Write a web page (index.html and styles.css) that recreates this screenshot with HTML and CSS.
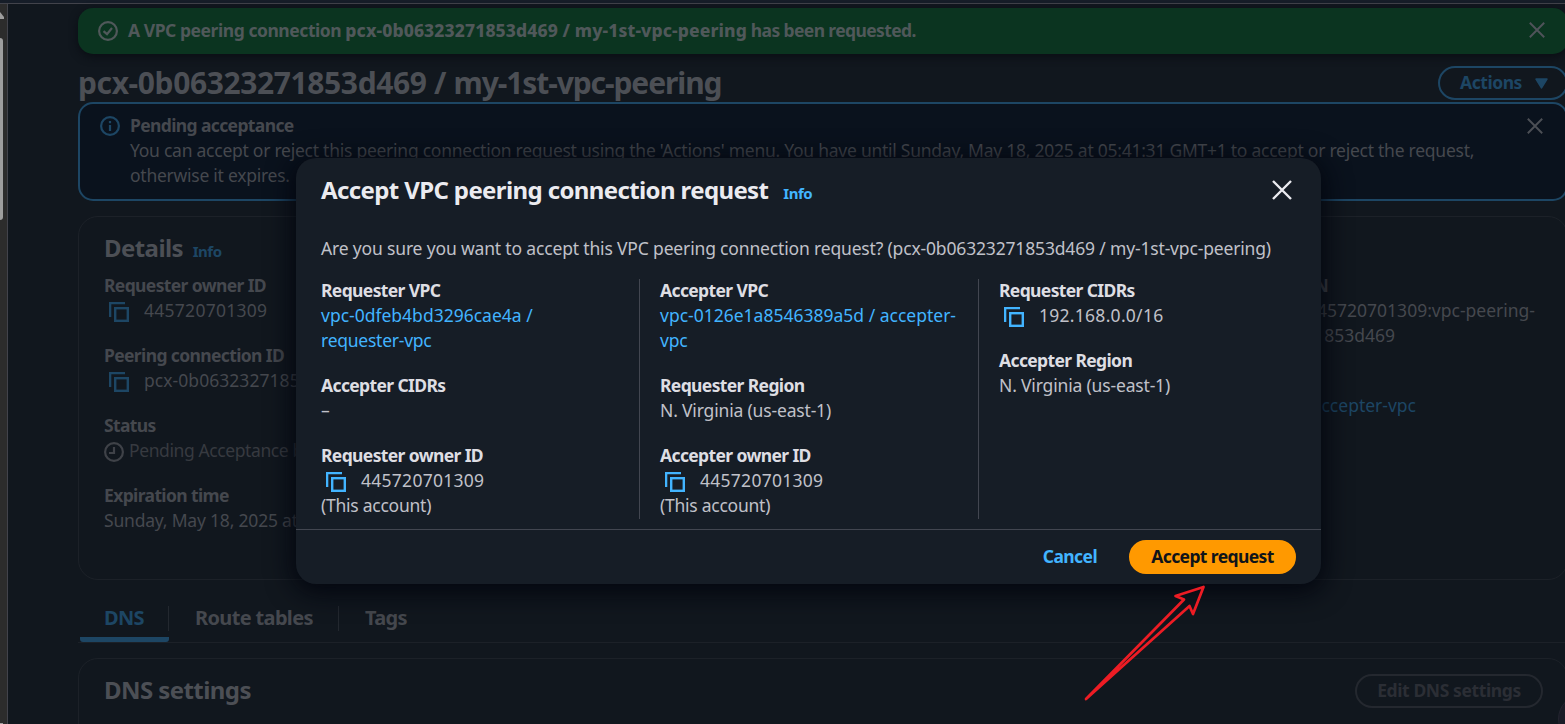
FILE: index.html
```html
<!DOCTYPE html>
<html lang="en">
<head>
<meta charset="utf-8">
<title>Accept VPC peering connection request</title>
<link rel="stylesheet" href="styles.css">
</head>
<body>
<svg class="defs" width="0" height="0">
  <defs>
    <symbol id="copy" viewBox="0 0 20 20"><path d="M1.15 15V1.15H16" fill="none" stroke="currentColor" stroke-width="2.3"/><rect x="6.2" y="6.2" width="12.6" height="12.6" fill="none" stroke="currentColor" stroke-width="2.4"/></symbol>
    <symbol id="close" viewBox="0 0 20 20"><path d="M1 1L19 19M19 1L1 19" fill="none" stroke="currentColor" stroke-width="2.4"/></symbol>
  </defs>
</svg>
<div class="topline"></div>
<div class="app">
  <div class="gutter">
    <svg class="scroll-up" width="4" height="8" viewBox="0 0 4 8"><path d="M0 0L4 5V7H0Z" fill="#9e9e9e"/></svg>
    <div class="thumb"></div>
    <div class="scroll-down"></div>
  </div>
  <main class="page">
    <div class="flash">
      <svg width="20" height="20" viewBox="0 0 20 20" fill="none" stroke="currentColor" stroke-width="2.2"><circle cx="10" cy="10" r="8.9"/><path d="M5.5 10.2L9 13.2L14 7"/></svg>
      <div class="flash-text"><span class="f1">A VPC peering connection </span><b class="f2">pcx-0b06323271853d469 / my-1st-vpc-peering</b><span class="f3"> has been requested.</span></div>
      <svg class="x" width="16" height="16"><use href="#close"/></svg>
    </div>
    <div class="head">
      <h1><span class="h1-id">pcx-0b06323271853d469 </span>/ <span class="h1-name">my-1st-vpc-peering</span></h1>
      <div class="btn actions">Actions <svg width="13" height="11" viewBox="0 0 12 10"><path d="M1 1H11L6 9Z" fill="currentColor" stroke="currentColor" stroke-width="1.5" stroke-linejoin="round"/></svg></div>
    </div>
    <div class="alert">
      <svg width="20" height="20" viewBox="0 0 20 20" fill="none" stroke="currentColor" stroke-width="2.2"><circle cx="10" cy="10" r="8.9"/><path d="M10 9V15M10 5V7.2"/></svg>
      <div class="alert-text">
        <div class="label a0">Pending acceptance</div>
        <div class="a1">You can accept or reject this peering connection request using the 'Actions' menu. You have until Sunday, May 18, 2025 at 05:41:31 GMT+1 to accept or reject the request,</div>
        <div class="a1">otherwise it expires.</div>
      </div>
      <svg class="x" width="16" height="16"><use href="#close"/></svg>
    </div>
    <section class="card details">
      <h2>Details <span class="info">Info</span></h2>
      <div class="detail-cols">
        <div class="col">
          <div><div class="label">Requester owner ID</div><div class="copyrow"><svg width="20" height="20"><use href="#copy"/></svg><span>445720701309</span></div></div>
          <div><div class="label">Peering connection ID</div><div class="copyrow pcx"><svg width="20" height="20"><use href="#copy"/></svg><span>pcx-0b06323271853d469</span></div></div>
          <div><div class="label">Status</div><div class="status"><svg width="20" height="20" viewBox="0 0 20 20" fill="none" stroke="currentColor" stroke-width="2.2"><circle cx="10" cy="10" r="8.9"/><path d="M10 5V11H5"/></svg><span>Pending Acceptance by</span></div></div>
          <div><div class="label">Expiration time</div><div class="exp">Sunday, May 18, 2025 at 05:41:31</div></div>
        </div>
        <div class="col tail">
          <div><div class="label t1">Peering connection ARN</div><div class="t2">445720701309:vpc-peering-</div><div class="t3">853d469</div></div>
          <div><div class="label t5">Accepter VPC</div><div class="link t4">accepter-vpc</div></div>
        </div>
      </div>
    </section>
    <nav class="tabs"><div class="tab on"><span>DNS</span></div><div class="tab"><span>Route tables</span></div><div class="tab"><span>Tags</span></div></nav>
    <section class="card dns">
      <h2>DNS settings</h2>
      <div class="btn edit">Edit DNS settings</div>
    </section>
  </main>
</div>
<div class="bubble"></div>
<div class="modal">
  <header class="m-head"><h2>Accept VPC peering connection request</h2><span class="info">Info</span><svg class="x" width="20" height="20"><use href="#close"/></svg></header>
  <p class="ask">Are you sure you want to accept this VPC peering connection request? (pcx-0b06323271853d469 / my-1st-vpc-peering)</p>
  <div class="m-cols">
    <div class="m-col">
      <div><div class="label">Requester VPC</div><div class="link">vpc-0dfeb4bd3296cae4a /</div><div class="link v1">requester-vpc</div></div>
      <div><div class="label">Accepter CIDRs</div><div class="dash">–</div></div>
      <div><div class="label">Requester owner ID</div><div class="copyrow"><svg width="20" height="20"><use href="#copy"/></svg><span>445720701309</span></div><div class="acct">(This account)</div></div>
    </div>
    <div class="m-col">
      <div><div class="label">Accepter VPC</div><div class="link">vpc-0126e1a8546389a5d / accepter-</div><div class="link v1">vpc</div></div>
      <div><div class="label">Requester Region</div><div class="region">N. Virginia (us-east-1)</div></div>
      <div><div class="label">Accepter owner ID</div><div class="copyrow"><svg width="20" height="20"><use href="#copy"/></svg><span>445720701309</span></div><div class="acct">(This account)</div></div>
    </div>
    <div class="m-col">
      <div><div class="label">Requester CIDRs</div><div class="copyrow"><svg width="20" height="20"><use href="#copy"/></svg><span>192.168.0.0/16</span></div></div>
      <div><div class="label">Accepter Region</div><div class="region">N. Virginia (us-east-1)</div></div>
    </div>
  </div>
  <footer class="m-foot"><span class="cancel">Cancel</span><div class="btn primary">Accept request</div></footer>
</div>
<svg class="arrow" width="130" height="124" viewBox="1080 580 130 124"><path d="M1086 699L1184 599.5L1175.5 596L1203.5 587L1193 614L1189.5 606Z" fill="none" stroke="#ed1c24" stroke-width="2.7" stroke-linejoin="round"/></svg>
</body>
</html>
```
FILE: styles.css
```css
* { box-sizing: border-box; }
body { margin: 0; width: 1565px; height: 724px; overflow: hidden; background: #11171e; color: #45484e; font: 17.5px/25px "Noto Sans", "Open Sans", sans-serif; white-space: nowrap; position: relative; }
svg { flex: none; display: block; }
.defs { position: absolute; }
h1, h2, p { margin: 0; }
.label { font-weight: 700; letter-spacing: -0.63px; }
.link { color: #1d4664; }
.topline { height: 4px; background: #161d28; border-bottom: 1px solid #42434b; }
.app { display: flex; height: 720px; }
.gutter { width: 8px; flex: none; background: #2c2c2c; border-right: 1px solid #42434b; padding-top: 8px; display: flex; flex-direction: column; }
.thumb { margin-top: 18px; width: 3px; height: 182px; border-radius: 0 3px 3px 0; background: #9e9e9e; }
.scroll-down { margin-top: auto; width: 3px; height: 1px; background: #9e9e9e; }
.page { width: 1490px; flex: none; margin-left: 70px; padding-top: 4px; }
.flash { height: 46px; border-radius: 15px; background: #0b3420; display: flex; align-items: center; padding: 0 23px 0 20px; color: #50585a; box-shadow: 0 3px 8px #0a0e14; }
.flash-text { margin-left: 10px; font-weight: 700; padding-bottom: 2px; white-space: pre; }
.f1 { letter-spacing: -0.45px; }
.f2 { font-weight: 800; letter-spacing: 0.1px; }
.f3 { letter-spacing: -0.62px; }
.x { margin-left: auto; }
.flash .x { color: #50535a; margin-bottom: 2px; }
.head { height: 48px; display: flex; justify-content: space-between; padding-top: 12px; }
h1 { font-size: 30px; line-height: 34px; color: #4c4f55; letter-spacing: -0.3px; }
.h1-id { letter-spacing: -0.39px; }
.h1-name { letter-spacing: -1.1px; }
.btn { height: 34px; border: 2px solid; border-radius: 17px; font-weight: 700; line-height: 28px; padding-bottom: 2px; display: flex; align-items: center; }
.actions { width: 130px; padding-left: 20px; color: #1d4664; gap: 13px; letter-spacing: -0.45px; }
.actions svg { margin-top: 2px; }
.alert { height: 99px; border: 2px solid #1d4664; border-radius: 15px; background: #0a121d; padding: 9px 23px 0 20px; display: flex; }
.alert > svg:first-child { color: #1d4664; margin-top: 3px; }
.alert-text { margin-left: 10px; width: 1380px; }
.a1 { letter-spacing: -0.255px; }
.alert .x { color: #4c4f55; margin-top: 5px; }
.card { border: 1px solid #1c2128; border-radius: 20px; }
h2 { font-size: 24px; line-height: 30px; font-weight: 700; color: #4c4f55; letter-spacing: -0.57px; }
.info { font-size: 15px; font-weight: 700; letter-spacing: -0.5px; color: #1d4664; }
.details .info { margin-left: 4px; }
.details { margin-top: 15px; height: 364px; padding: 16px 25px 0; }
.detail-cols { display: flex; margin-top: 7px; }
.col { display: flex; flex-direction: column; gap: 20px; }
.copyrow { display: flex; height: 25px; padding-left: 5px; letter-spacing: 0.27px; }
.pcx { letter-spacing: 0.05px; }
.copyrow svg { color: #1d4664; margin-top: 4px; margin-right: 15px; }
.status { display: flex; gap: 5px; color: #373a40; letter-spacing: -0.4px; }
.status svg { margin-top: 4px; color: #3f4248; }
.exp { letter-spacing: -0.2px; }
.col:first-child { width: 900px; }
.tail > div > div { display: flex; justify-content: flex-end; }
.t1 { width: 324px; } .t2 { width: 531px; } .t3 { width: 391px; } .t4 { width: 412px; } .t5 { width: 250px; }
.tabs { margin-top: 14px; height: 49px; display: flex; border-bottom: 1px solid #1c2128; font-size: 20px; font-weight: 700; line-height: 23px; padding-left: 2px; letter-spacing: -0.65px; }
.tab { padding-top: 12px; }
.tab span { display: block; height: 25px; padding: 0 25px 0 26px; border-right: 1px solid #23282f; }
.tab:last-child span { border: 0; }
.on { color: #1d4664; border-bottom: 5px solid #1d4664; border-radius: 0 0 3px 3px; }
.tab.on span { padding: 0 24px; }
.dns { margin-top: 15px; height: 90px; padding: 15px 24px 0 25px; display: flex; justify-content: space-between; align-items: flex-start; }
.dns h2 { line-height: 32px; }
.edit { width: 188px; justify-content: center; color: #2b2e35; border-color: #24282f; letter-spacing: -0.4px; }
.bubble { position: absolute; left: 1558px; top: 694px; width: 50px; height: 50px; border-radius: 25px; background: #1a1b26; border: 1px solid #23242f; }
.modal { position: absolute; left: 296px; top: 158px; width: 1025px; height: 426px; border-radius: 20px; background: #161d26; color: #c0c1c9; box-shadow: 0 5px 26px 4px #03060f; }
.m-head { display: flex; align-items: center; height: 63px; padding: 0 29px 0 25px; }
.m-head h2 { color: #ebebf0; letter-spacing: -0.62px; }
.m-head .info { margin: 7px 0 0 15px; }
.modal .link, .modal .info, .modal .copyrow svg { color: #42b4ff; }
.modal .label { color: #dedee3; }
.modal .x { color: #ebebf0; }
.ask { padding: 15px 25px 0; height: 57px; letter-spacing: -0.165px; }
.m-cols { display: grid; grid-template-columns: 339px 339px 1fr; height: 240px; padding-left: 5px; margin-top: 1px; }
.m-col { padding: 0 0 0 20px; border-right: 1px solid #424650; display: flex; flex-direction: column; gap: 20px; }
.m-col > div:first-child { margin-top: -1px; }
.m-col:last-child { border: 0; }
.v1, .acct { letter-spacing: -0.25px; }
.region { letter-spacing: -0.17px; }
.m-foot { margin-top: 10px; height: 55px; border-top: 1px solid #424650; display: flex; justify-content: flex-end; align-items: center; padding-right: 25px; gap: 32px; }
.cancel { font-weight: 700; color: #42b4ff; letter-spacing: -0.6px; padding-bottom: 2px; }
.primary { width: 167px; justify-content: center; background: #ff9900; border-color: #ff9900; color: #0f141a; letter-spacing: -0.6px; }
.arrow { position: absolute; left: 1080px; top: 580px; }
```
